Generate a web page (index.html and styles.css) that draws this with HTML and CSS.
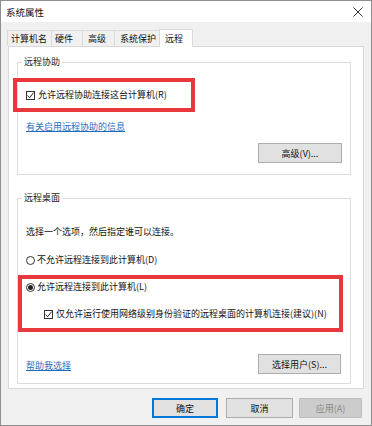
FILE: index.html
```html
<!DOCTYPE html>
<html lang="zh-CN">

<head>
    <meta charset="UTF-8" />
    <title>系统属性</title>
    <link rel="stylesheet" href="styles.css">
</head>

<body>

    <div class="window">
        <div class="titlebar">
            <span class="title">系统属性</span>
            <svg class="close" width="10" height="10" viewBox="0 0 10 10">
                <path d="M0.5 0.5 L9.5 9.5 M9.5 0.5 L0.5 9.5" stroke="#333" stroke-width="1" fill="none" />
            </svg>
        </div>

        <div class="tabs">
            <div class="tab tab-name">计算机名</div>
            <div class="tab tab-hw">硬件</div>
            <div class="tab tab-adv">高级</div>
            <div class="tab tab-prot">系统保护</div>
            <div class="tab tab-remote active">远程</div>
        </div>

        <div class="panel">
            <fieldset class="group group-assist">
                <legend>远程协助</legend>
                <div class="mark mark-assist">
                    <label class="option">
                        <span class="check"><svg width="9" height="9" viewBox="0 0 9 9"><path d="M1.5 4.5 L3.6 6.8 L7.6 1.6" stroke="#222" stroke-width="1" fill="none" /></svg></span>
                        允许远程协助连接这台计算机(R)
                    </label>
                </div>
                <a class="link link-info" href="#">有关启用远程协助的信息</a>
                <div class="btn-row">
                    <button class="btn">高级(V)...</button>
                </div>
            </fieldset>

            <fieldset class="group group-desktop">
                <legend>远程桌面</legend>
                <p class="hint">选择一个选项，然后指定谁可以连接。</p>
                <label class="option radio-off">
                    <span class="radio"></span>
                    不允许远程连接到此计算机(D)
                </label>
                <div class="mark mark-desktop">
                    <label class="option">
                        <span class="radio on"><span class="dot"></span></span>
                        允许远程连接到此计算机(L)
                    </label>
                    <label class="option sub">
                        <span class="check"><svg width="9" height="9" viewBox="0 0 9 9"><path d="M1.5 4.5 L3.6 6.8 L7.6 1.6" stroke="#222" stroke-width="1" fill="none" /></svg></span>
                        仅允许运行使用网络级别身份验证的远程桌面的计算机连接(建议)(N)
                    </label>
                </div>
                <div class="help-row">
                    <a class="link" href="#">帮助我选择</a>
                    <button class="btn">选择用户(S)...</button>
                </div>
            </fieldset>
        </div>

        <div class="footer">
            <button class="btn btn-ok">确定</button>
            <button class="btn btn-cancel">取消</button>
            <button class="btn btn-apply" disabled>应用(A)</button>
        </div>
    </div>

</body>

</html>
```

FILE: styles.css
```css
body {
    margin: 0;
    padding: 0;
    font-family: "Noto Sans CJK SC", "Liberation Sans", sans-serif;
    font-size: 9px;
    color: #111;
}

.window {
    width: 372px;
    height: 426px;
    box-sizing: border-box;
    border: 1px solid #8f8f8f;
    background: #f0f0f0;
}

.titlebar {
    height: 21px;
    background: #fff;
    display: flex;
    align-items: center;
    justify-content: space-between;
    padding: 0 8px 0 5px;
}

.title {
    font-size: 9.5px;
}

.tabs {
    display: flex;
    align-items: flex-end;
    height: 17px;
    margin-top: 7px;
    padding-left: 6px;
}

.tab {
    height: 16px;
    line-height: 15px;
    box-sizing: border-box;
    border: 1px solid #dadada;
    border-bottom: none;
    border-right: none;
    background: #f0f0f0;
}

.tab-name {
    width: 44px;
    padding-left: 3px;
}

.tab-hw {
    width: 31px;
    padding-left: 3px;
}

.tab-adv {
    width: 32px;
    padding-left: 5px;
}

.tab-prot {
    width: 45px;
    padding-left: 5px;
}

.tab-remote {
    width: 34px;
    padding-left: 5px;
}

.tab.active {
    height: 18px;
    line-height: 17px;
    background: #fff;
    border-right: 1px solid #dadada;
    margin-bottom: -1px;
    position: relative;
    z-index: 1;
}

.panel {
    margin: 0 7px;
    height: 343px;
    box-sizing: border-box;
    background: #fff;
    border: 1px solid #d9d9d9;
    padding: 9px 0 0 8px;
}

.group {
    width: 334px;
    box-sizing: border-box;
    margin: 0;
    padding: 0;
    border: 1px solid #dcdcdc;
}

.group legend {
    margin-left: 4px;
    padding: 0 2px;
    line-height: 12px;
    color: #222;
}

.group-desktop {
    margin-top: 17px;
}

.mark {
    border: 4px solid #e8383d;
    box-sizing: border-box;
}

.mark-assist {
    width: 182px;
    height: 34px;
    margin: 10px 0 0 -5px;
    padding-left: 9px;
    display: flex;
    align-items: center;
}

.option {
    display: flex;
    align-items: center;
    height: 12px;
    line-height: 12px;
    white-space: nowrap;
}

.check {
    width: 9px;
    height: 9px;
    box-sizing: border-box;
    border: 1px solid #333;
    margin-right: 3px;
    display: flex;
}

.check svg {
    margin: -1px;
}

.radio {
    width: 9px;
    height: 9px;
    box-sizing: border-box;
    border: 1px solid #333;
    border-radius: 50%;
    margin-right: 2px;
    display: flex;
    align-items: center;
    justify-content: center;
}

.radio .dot {
    width: 5px;
    height: 5px;
    border-radius: 50%;
    background: #222;
}

.link {
    display: inline-block;
    color: #1e6cc0;
    text-decoration: underline;
    line-height: 12px;
}

.link-info {
    margin: 9px 0 0 8px;
}

.btn-row {
    display: flex;
    justify-content: flex-end;
    margin: 10px 8px 11px 0;
}

.btn {
    font-family: inherit;
    font-size: 9px;
    color: #111;
    background: #e1e1e1;
    border: 1px solid #adadad;
    height: 20px;
    width: 84px;
    padding: 0;
}

.hint {
    margin: 22px 0 0 8px;
    line-height: 12px;
}

.radio-off {
    margin: 16px 0 0 8px;
}

.mark-desktop {
    width: 325px;
    height: 57px;
    margin-top: 9px;
    padding: 2px 0 0 4px;
}

.option.sub {
    margin: 15px 0 0 18px;
}

.help-row {
    display: flex;
    justify-content: space-between;
    align-items: center;
    margin: 22px 9px 9px 8px;
}

.help-row .link {
    margin-top: 4px;
}

.help-row .btn {
    width: 83px;
}

.footer {
    display: flex;
    justify-content: flex-end;
    margin-top: 9px;
    padding-right: 9px;
}

.footer .btn {
    height: 20px;
}

.btn-ok {
    width: 66px;
    border: 2px solid #0078d7;
}

.btn-cancel {
    width: 67px;
    margin-left: 8px;
}

.btn-apply {
    width: 63px;
    margin-left: 6px;
    background: #cccccc;
    border-color: #bfbfbf;
    color: #8a8a8a;
}
```
